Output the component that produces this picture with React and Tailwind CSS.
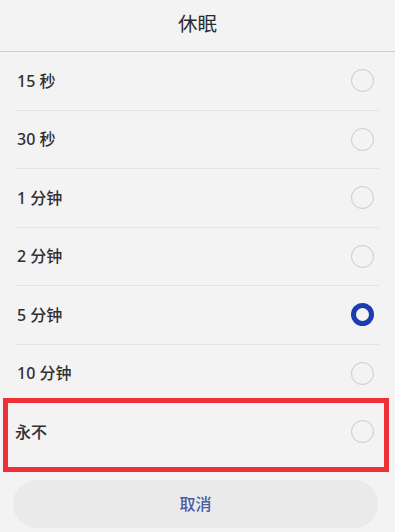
import React from "react";

const OPTIONS = ["15 秒", "30 秒", "1 分钟", "2 分钟", "5 分钟", "10 分钟", "永不"];
const SELECTED = "5 分钟";

function Radio({ on }) {
  return on ? (
    <span className="block w-[23px] h-[23px] rounded-full border-[5px] border-[#1b3db0] bg-[#f4f3f4]" />
  ) : (
    <span className="block w-[23px] h-[23px] rounded-full border-[1.5px] border-[#c9c9c9]" />
  );
}

export default function App() {
  return (
    <div
      className="w-[395px] h-[532px] overflow-hidden bg-[#f4f3f4] text-[#303030] flex flex-col"
      style={{ fontFamily: '"Noto Sans", "Noto Sans CJK SC", sans-serif' }}
    >
      <div className="h-[51px] flex items-center justify-center text-[19.5px] text-[#2b2b2b] pb-[4px]">休眠</div>
      <div className="h-px bg-[#cfcfcf]" />
      <div className="flex flex-col">
        {OPTIONS.map((o, i) => (
          <div key={o} className="relative">
            {i > 0 && <div className="h-px bg-[#e3e3e3] mx-[16px]" />}
            <div className="h-[57.5px] flex items-center justify-between pl-[17px] pr-[21px] text-[16px] font-medium">
              <span className={o === "永不" ? "-ml-[2px]" : ""}>{o}</span>
              <Radio on={o === SELECTED} />
            </div>
            {o === "永不" && (
              <div className="absolute left-[3px] right-[6px] top-[-4px] h-[74px] border-[5px] border-[#ee3035]" />
            )}
          </div>
        ))}
      </div>
      <div className="mt-[19px] ml-[13px] mr-[17px] h-[48px] rounded-full bg-[#eaeaea] flex items-center justify-center text-[16px] font-medium text-[#4d5aa6]">
        取消
      </div>
    </div>
  );
}
